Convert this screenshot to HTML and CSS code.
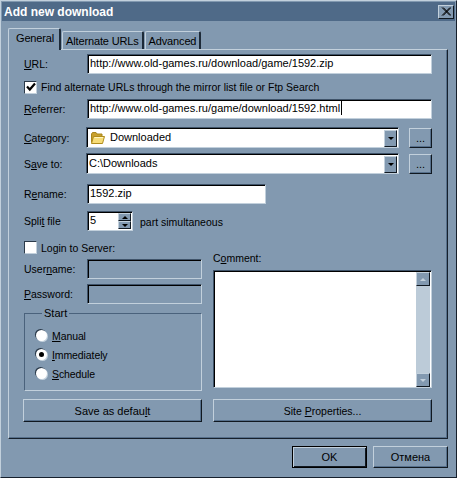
FILE: index.html
```html
<!DOCTYPE html>
<html lang="en">
<head>
  <meta charset="UTF-8" />
  <title>Add new download</title>
  <link rel="stylesheet" href="styles.css">
</head>
<body>
  <div class="window">
    <div class="titlebar">
      <span class="title">Add new download</span>
      <span class="close">
        <svg width="10" height="9" viewBox="0 0 10 9"><path d="M1 0.5 L9 8.5 M2.2 0.5 L10 8.5 M9 0.5 L1 8.5 M10 0.5 L2.2 8.5" stroke="#000" fill="none"/></svg>
      </span>
    </div>

    <div class="tabs">
      <div class="tab active">General</div>
      <div class="tab">Alternate URLs</div>
      <div class="tab">Advanced</div>
    </div>

    <div class="pane">
      <div class="row row-url">
        <label class="label"><u>U</u>RL:</label>
        <div class="field field-wide">http://www.old-games.ru/download/game/1592.zip</div>
      </div>
      <div class="row row-check">
        <span class="checkbox">
          <svg width="10" height="10" viewBox="0 0 10 10"><path d="M1 4.5 L3.8 7.5 L9 1.5" stroke="#000" stroke-width="2.2" fill="none"/></svg>
        </span>
        <span class="check-text">Find alternate URLs through the mirror list file or Ftp Search</span>
      </div>
      <div class="row row-ref">
        <label class="label"><u>R</u>eferrer:</label>
        <div class="field field-wide">http://www.old-games.ru/game/download/1592.html<span class="caret"></span></div>
      </div>

      <div class="row row-cat">
        <label class="label label-combo"><u>C</u>ategory:</label>
        <div class="field combo">
          <svg class="folder" width="15" height="14" viewBox="0 0 15 14">
            <path d="M1.5 11.5 V3 L2.5 1.5 H6 L7 3 H12 V5" fill="#c9a02c" stroke="#a8861c"/>
            <path d="M1.5 12.5 L3.5 5.5 H14.5 L12.5 12.5 Z" fill="#f6dc78" stroke="#b08c1c"/>
            <path d="M4.5 6.5 H13" stroke="#fff4c0"/>
          </svg>
          <span class="combo-text">Downloaded</span>
          <span class="combo-btn"><i class="arrow-down"></i></span>
        </div>
        <div class="btn btn-dots">...</div>
      </div>
      <div class="row row-save">
        <label class="label label-combo">S<u>a</u>ve to:</label>
        <div class="field combo">
          <span class="combo-plain">C:\Downloads</span>
          <span class="combo-btn"><i class="arrow-down"></i></span>
        </div>
        <div class="btn btn-dots">...</div>
      </div>

      <div class="row row-rename">
        <label class="label">R<u>e</u>name:</label>
        <div class="field field-rename">1592.zip</div>
      </div>
      <div class="row row-split">
        <label class="label">Spli<u>t</u> file</label>
        <div class="field field-split">
          <span class="split-value">5</span>
          <span class="spin">
            <span class="spin-btn"><i class="arrow-up"></i></span>
            <span class="spin-btn"><i class="arrow-down"></i></span>
          </span>
        </div>
        <span class="split-text">part simultaneous</span>
      </div>

      <div class="lower">
        <div class="lower-left">
          <div class="row row-login">
            <span class="checkbox"></span>
            <span class="check-text">Login to Server:</span>
          </div>
          <div class="row row-user">
            <label class="label">User<u>n</u>ame:</label>
            <div class="field field-off"></div>
          </div>
          <div class="row row-pass">
            <label class="label"><u>P</u>assword:</label>
            <div class="field field-off"></div>
          </div>
          <fieldset class="group">
            <legend>Start</legend>
            <div class="radio-row"><span class="radio"></span><span><u>M</u>anual</span></div>
            <div class="radio-row"><span class="radio checked"></span><span><u>I</u>mmediately</span></div>
            <div class="radio-row"><span class="radio"></span><span><u>S</u>chedule</span></div>
          </fieldset>
        </div>
        <div class="lower-right">
          <div class="comment-label">C<u>o</u>mment:</div>
          <div class="field memo">
            <div class="memo-text"></div>
            <div class="scroll">
              <span class="scroll-btn"><i class="arrow-up dim"></i></span>
              <span class="scroll-track"></span>
              <span class="scroll-btn"><i class="arrow-down dim"></i></span>
            </div>
          </div>
        </div>
      </div>

      <div class="actions">
        <div class="btn btn-left"><span>Save as defau<u>l</u>t</span></div>
        <div class="btn btn-right"><span>Site <u>P</u>roperties...</span></div>
      </div>
    </div>

    <div class="footer">
      <div class="btn btn-ok">OK</div>
      <div class="btn btn-cancel">Отмена</div>
    </div>
  </div>
</body>
</html>
```

FILE: styles.css
```css
html, body {
  margin: 0;
  padding: 0;
  background-color: #8299b0;
}

body {
  font-family: "Liberation Sans", Arial, sans-serif;
  font-size: 11px;
  color: #000;
}

.window {
  box-sizing: border-box;
  width: 457px;
  height: 478px;
  background-color: #8299b0;
  border: 1px solid;
  border-color: #c2d0dc #16202c #16202c #c2d0dc;
  padding: 1px;
  overflow: hidden;
}

.titlebar {
  height: 19px;
  background-color: #4f6a88;
  display: flex;
  align-items: center;
  justify-content: space-between;
  padding: 0 1px 0 2px;
}

.title {
  color: #fff;
  font-weight: bold;
  font-size: 12px;
  margin-top: 1px;
}

.close {
  box-sizing: border-box;
  width: 16px;
  height: 14px;
  display: flex;
  align-items: center;
  justify-content: center;
  background-color: #8299b0;
  border: 1px solid;
  border-color: #c2d0dc #101820 #101820 #c2d0dc;
}

.tabs {
  display: flex;
  align-items: flex-end;
  height: 28px;
  margin-left: 6px;
  position: relative;
  z-index: 1;
}

.tab {
  box-sizing: border-box;
  height: 18px;
  line-height: 18px;
  padding: 0 3px;
  margin-right: 1px;
  letter-spacing: -0.15px;
  border-top: 1px solid #c2d0dc;
  border-left: 1px solid #c2d0dc;
  border-right: 2px solid #1d2a38;
  border-radius: 2px 2px 0 0;
}

.tab.active {
  height: 22px;
  line-height: 18px;
  padding: 0 5px 0 7px;
  margin-bottom: -1px;
  background-color: #8299b0;
}

.pane {
  box-sizing: border-box;
  width: 440px;
  height: 390px;
  margin-left: 6px;
  padding: 0 15px;
  border: 1px solid;
  border-color: #c2d0dc #16202c #16202c #c2d0dc;
  box-shadow: inset -1px -1px 0 #56708c;
}

.row {
  display: flex;
  align-items: center;
}

.label {
  width: 63px;
  flex: none;
  font-size: 10.5px;
}

.label-combo {
  width: 62px;
}

.row-url { margin-top: 4px; }
.row-check { margin-top: 6px; height: 14px; }
.row-ref { margin-top: 5px; }
.row-cat { margin-top: 8px; }
.row-save { margin-top: 5px; }
.row-rename { margin-top: 10px; }
.row-split { margin-top: 7px; }

.field {
  box-sizing: border-box;
  height: 20px;
  line-height: 17px;
  padding-left: 2px;
  background-color: #fff;
  border: 1px solid;
  border-color: #3f5369 #c2d0dc #c2d0dc #3f5369;
  box-shadow: inset 1px 1px 0 #000;
  white-space: nowrap;
  overflow: hidden;
}

.field-wide { width: 345px; }
.field-rename { width: 179px; }

.caret {
  display: inline-block;
  width: 1px;
  height: 14px;
  margin-left: 1px;
  vertical-align: -3px;
  background-color: #000;
}

.checkbox {
  box-sizing: border-box;
  width: 13px;
  height: 13px;
  flex: none;
  display: flex;
  align-items: center;
  justify-content: center;
  background-color: #fff;
  border: 1px solid;
  border-color: #2b3a4a #c2d0dc #c2d0dc #2b3a4a;
}

.check-text {
  margin-left: 4px;
  font-size: 10.5px;
}

.combo {
  width: 314px;
  height: 21px;
  display: flex;
  align-items: center;
  padding-right: 1px;
}

.folder {
  margin-left: 1px;
  flex: none;
}

.combo-text {
  margin-left: 5px;
  flex: 1;
}

.combo-plain {
  flex: 1;
}

.combo-btn {
  box-sizing: border-box;
  width: 13px;
  height: 17px;
  margin-top: 1px;
  display: flex;
  align-items: center;
  justify-content: center;
  background-color: #8299b0;
  border: 1px solid;
  border-color: #c2d0dc #101820 #101820 #c2d0dc;
}

.arrow-down, .arrow-up {
  display: block;
  width: 0;
  height: 0;
  border-left: 3px solid transparent;
  border-right: 3px solid transparent;
}

.arrow-down { border-top: 3px solid #000; }
.arrow-up { border-bottom: 3px solid #000; }
.arrow-down.dim { border-top-color: #c2d0dc; }
.arrow-up.dim { border-bottom-color: #c2d0dc; }

.btn {
  box-sizing: border-box;
  display: flex;
  align-items: center;
  justify-content: center;
  background-color: #8299b0;
  border: 1px solid;
  border-color: #c2d0dc #101820 #101820 #c2d0dc;
  box-shadow: inset -1px -1px 0 #56708c;
}

.btn-dots {
  width: 23px;
  height: 20px;
  margin-left: 10px;
}

.field-split {
  width: 46px;
  height: 20px;
  display: flex;
  justify-content: space-between;
  padding-right: 1px;
}

.split-value {
  line-height: 17px;
}

.spin {
  display: flex;
  flex-direction: column;
  width: 13px;
  margin-top: 1px;
}

.spin-btn {
  box-sizing: border-box;
  height: 8px;
  display: flex;
  align-items: center;
  justify-content: center;
  background-color: #8299b0;
  border: 1px solid;
  border-color: #c2d0dc #101820 #101820 #c2d0dc;
}

.split-text {
  margin-left: 7px;
  margin-top: 2px;
  font-size: 10.5px;
}

.lower {
  display: flex;
  gap: 11px;
  margin-top: 10px;
}

.lower-left {
  width: 178px;
  flex: none;
}

.lower-right {
  width: 219px;
  flex: none;
}

.row-login { height: 13px; }
.row-user { margin-top: 5px; }
.row-pass { margin-top: 5px; }

.field-off {
  width: 115px;
  background-color: #8299b0;
}

.group {
  box-sizing: border-box;
  width: 178px;
  height: 85px;
  margin: 2px 0 0;
  padding: 6px 0 0 11px;
  border: 1px solid;
  border-color: #4a627c #c2d0dc #c2d0dc #4a627c;
}

.group legend {
  padding: 0 2px;
  margin-left: 6px;
  line-height: 14px;
}

.radio-row {
  display: flex;
  align-items: center;
  height: 19px;
  gap: 5px;
  font-size: 10.5px;
  letter-spacing: -0.1px;
}

.radio {
  box-sizing: border-box;
  width: 11px;
  height: 11px;
  flex: none;
  display: flex;
  align-items: center;
  justify-content: center;
  border-radius: 50%;
  background-color: #fff;
  box-shadow: -1px -1px 0 #2b3a4a, 1px 1px 0 #c2d0dc;
}

.radio.checked::after {
  content: "";
  width: 5px;
  height: 5px;
  border-radius: 50%;
  background-color: #000;
}

.comment-label {
  height: 18px;
  line-height: 13px;
  margin-top: 11px;
  font-size: 10.5px;
}

.memo {
  width: 219px;
  height: 118px;
  display: flex;
  justify-content: flex-end;
  padding: 1px 1px 0 0;
}

.scroll {
  width: 14px;
  display: flex;
  flex-direction: column;
}

.scroll-btn {
  box-sizing: border-box;
  height: 14px;
  flex: none;
  display: flex;
  align-items: center;
  justify-content: center;
  background-color: #8299b0;
  border: 1px solid;
  border-color: #c2d0dc #101820 #101820 #c2d0dc;
}

.scroll-track {
  flex: 1;
  background-color: #bccbd8;
}

.actions {
  display: flex;
  gap: 11px;
  margin-top: 8px;
  margin-left: -1px;
}

.btn-left {
  width: 179px;
  height: 23px;
}

.btn-right {
  width: 219px;
  height: 23px;
  font-size: 10.5px;
}

.footer {
  display: flex;
  justify-content: flex-end;
  gap: 6px;
  margin-top: 7px;
  padding-right: 7px;
}

.btn-ok {
  width: 75px;
  height: 22px;
  border-color: #000;
  box-shadow: inset 1px 1px 0 #c2d0dc, inset -1px -1px 0 #101820;
}

.btn-cancel {
  width: 75px;
  height: 22px;
}
```
